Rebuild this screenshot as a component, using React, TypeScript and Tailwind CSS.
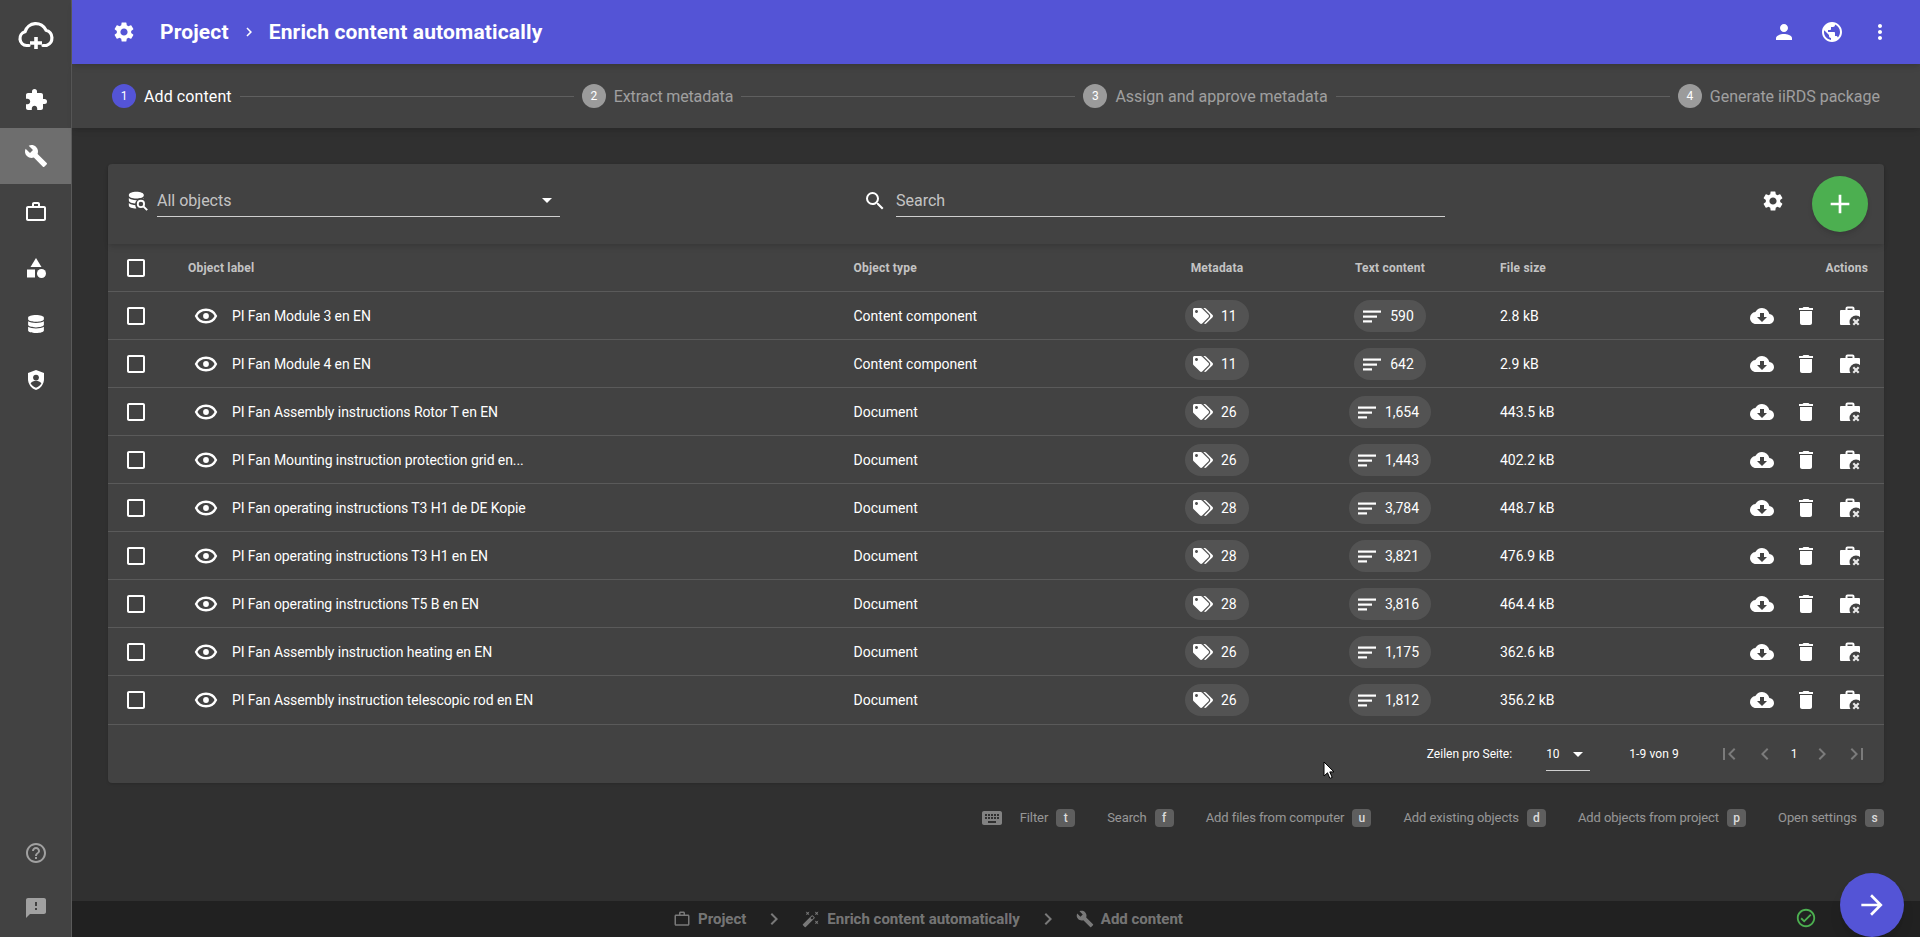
import React from "react";
import {
  MdSettings, MdChevronRight, MdChevronLeft, MdPerson, MdPublic, MdMoreVert, MdExtension, MdBuild,
  MdWorkOutline, MdCategory, MdHelpOutline, MdFeedback, MdArrowDropDown, MdSearch, MdAdd,
  MdCheckBoxOutlineBlank, MdCloudDownload, MdDelete, MdFirstPage, MdLastPage,
  MdKeyboard, MdAutoFixHigh, MdOutlineCheckCircle, MdArrowForward,
} from "react-icons/md";
import { FaTags, FaDatabase } from "react-icons/fa";

const rows = [
  ["PI Fan Module 3 en EN", "Content component", "11", "590", "2.8 kB"],
  ["PI Fan Module 4 en EN", "Content component", "11", "642", "2.9 kB"],
  ["PI Fan Assembly instructions Rotor T en EN", "Document", "26", "1,654", "443.5 kB"],
  ["PI Fan Mounting instruction protection grid en...", "Document", "26", "1,443", "402.2 kB"],
  ["PI Fan operating instructions T3 H1 de DE Kopie", "Document", "28", "3,784", "448.7 kB"],
  ["PI Fan operating instructions T3 H1 en EN", "Document", "28", "3,821", "476.9 kB"],
  ["PI Fan operating instructions T5 B en EN", "Document", "28", "3,816", "464.4 kB"],
  ["PI Fan Assembly instruction heating en EN", "Document", "26", "1,175", "362.6 kB"],
  ["PI Fan Assembly instruction telescopic rod en EN", "Document", "26", "1,812", "356.2 kB"],
];

const gridCols = "grid grid-cols-[80px_665.5px_300.5px_126px_220px_150px_1fr] items-center";

function LogoIcon() {
  return (
    <svg width="38" height="30" viewBox="0 0 38 30" fill="none">
      <path d="M12 24.5H9.5A7 7 0 0 1 8 10.8A11.2 11.2 0 0 1 29 9.2A8 8 0 0 1 29.5 24.5H26" stroke="white" strokeWidth="3.2" strokeLinecap="round" />
      <path d="M19 16v12M13 22h12" stroke="white" strokeWidth="3.6" />
    </svg>
  );
}

function ShieldIcon() {
  return (
    <svg width="24" height="24" viewBox="0 0 24 24">
      <path fill="white" d="M12 2 4 5v6.100c0 5 3.400 9.700 8 10.900 4.600-1.200 8-5.900 8-10.900V5z" />
      <circle cx="12" cy="9.600" r="2.900" fill="#424242" />
      <path fill="#424242" d="M6.600 15.600c1-1.900 3.200-2.800 5.400-2.800s4.400.9 5.400 2.800c-1.200 1.900-3.100 3.500-5.400 4.200-2.300-.7-4.200-2.300-5.400-4.200z" />
    </svg>
  );
}

function DbSearchIcon() {
  return (
    <svg width="20" height="20" viewBox="0 0 24 24">
      <path fill="white" d="M1 5c0-2.500 4-4 9-4s9 1.500 9 4-4 4-9 4-9-1.500-9-4zm0 3.500c1.500 1.700 5 2.600 9 2.600s7.500-.9 9-2.600V11c0 2.500-4 4-9 4s-9-1.500-9-4zm0 6c1.500 1.700 5 2.600 9 2.600v3.900c-5 0-9-1.500-9-4z" />
      <circle cx="16" cy="16" r="7.500" fill="#424242" />
      <circle cx="15.500" cy="15.500" r="3.800" fill="none" stroke="white" strokeWidth="2.200" />
      <path d="M18.500 18.500 23 23" stroke="white" strokeWidth="2.400" />
    </svg>
  );
}

function BriefcaseRemoveIcon() {
  return (
    <svg width="24" height="24" viewBox="0 0 24 24">
      <path fill="white" fillRule="evenodd" d="M7.500 6V4.500A2 2 0 0 1 9.500 2.500h5a2 2 0 0 1 2 2V6H21a1 1 0 0 1 1 1v13a1 1 0 0 1-1 1H3a1 1 0 0 1-1-1V7a1 1 0 0 1 1-1zm2 0h5V4.500h-5z" />
      <circle cx="18" cy="18" r="6.500" fill="#424242" />
      <path d="M15.300 15.300l5.400 5.400M20.700 15.300l-5.400 5.400" stroke="#e8e8e8" strokeWidth="2.200" />
    </svg>
  );
}

function LinesIcon() {
  return (
    <svg width="24" height="24" viewBox="0 0 24 24" fill="white">
      <rect x="3" y="6.500" width="18" height="2.200" />
      <rect x="3" y="11.500" width="14" height="2.200" />
      <rect x="3" y="16.300" width="9" height="2.200" />
    </svg>
  );
}

function EyeIcon() {
  return (
    <svg width="24" height="24" viewBox="0 0 24 24" className="ml-[6px]">
      <path fill="none" stroke="white" strokeWidth="2.400" d="M12 5.800c4.400 0 8.200 2.500 9.900 6.200-1.700 3.700-5.500 6.200-9.900 6.200S3.800 15.700 2.100 12C3.800 8.300 7.600 5.800 12 5.800z" />
      <circle cx="12" cy="12" r="2.900" fill="white" />
    </svg>
  );
}

function Cursor() {
  return (
    <svg className="absolute left-[1323px] top-[761px]" width="13" height="19" viewBox="0 0 13 19">
      <path d="M1 1v14l3.500-3.200 2.400 5.600 2.300-1-2.400-5.500H11z" fill="white" stroke="black" strokeWidth="1" />
    </svg>
  );
}

function NavItem({ children, active }: { children: React.ReactNode; active?: boolean }) {
  return <div className={`flex h-14 items-center justify-center ${active ? "bg-[#6e6e6e]" : ""}`}>{children}</div>;
}

function Step({ n, label, active, tracking }: { n: number; label: string; active?: boolean; tracking?: string }) {
  return (
    <div className="flex items-center">
      <div className={`flex size-6 items-center justify-center rounded-full text-xs ${active ? "bg-[#5454d6]" : "bg-[#9b9b9b]"} text-white`}>{n}</div>
      <span className={`ml-2 pt-px text-base ${tracking ?? ""} ${active ? "text-white" : "text-white/50"}`}>{label}</span>
    </div>
  );
}

function Line() {
  return <div className="mx-2 h-px flex-1 bg-[#5f5f5f]" />;
}

function Hint({ label, k }: { label: string; k: string }) {
  return (
    <div className="ml-8 flex items-center">
      <span className="text-[13px] tracking-[-0.08px] text-white/50">{label}</span>
      <span className="ml-2 flex h-[18px] w-[19px] items-center justify-center rounded-sm bg-[#5e5e5e] text-xs font-medium text-[#dcdcdc]">{k}</span>
    </div>
  );
}

function Crumb({ icon, label }: { icon: React.ReactNode; label: string }) {
  return (
    <div className="flex items-center">
      {icon}
      <span className="ml-[7px] text-[15px] font-bold text-white/40">{label}</span>
    </div>
  );
}

export default function App() {
  return (
    <div className="relative flex h-[937px] w-[1920px] overflow-hidden bg-[#303030] font-['Roboto',sans-serif] text-white">
      <aside className="flex w-[72px] shrink-0 flex-col border-r border-[#5a5a5a] bg-[#424242]">
        <div className="flex h-[72px] items-center justify-center"><LogoIcon /></div>
        <NavItem><MdExtension size={24} /></NavItem>
        <NavItem active><MdBuild size={24} /></NavItem>
        <NavItem><MdWorkOutline size={24} /></NavItem>
        <NavItem><MdCategory size={24} /></NavItem>
        <NavItem><FaDatabase size={18} /></NavItem>
        <NavItem><ShieldIcon /></NavItem>
        <div className="mt-auto flex h-[52px] items-center justify-center text-white/50"><MdHelpOutline size={24} /></div>
        <div className="flex h-[58px] items-center justify-center text-white/50"><MdFeedback size={24} /></div>
      </aside>

      <div className="flex min-w-0 flex-1 flex-col">
        <header className="relative z-20 flex h-16 shrink-0 items-center bg-[#5454d6] pl-10 pr-[28px] shadow-md">
          <MdSettings size={24} />
          <span className="ml-6 pt-[2px] text-[21px] font-bold tracking-[0.15px]">Project</span>
          <MdChevronRight size={18} className="ml-[11px]" />
          <span className="ml-[11px] pt-[2px] text-[21px] font-bold tracking-[0.15px]">Enrich content automatically</span>
          <div className="ml-auto flex items-center gap-6">
            <MdPerson size={24} />
            <MdPublic size={24} />
            <MdMoreVert size={24} />
          </div>
        </header>

        <div className="relative z-10 flex h-16 shrink-0 items-center bg-[#424242] pl-10 pr-10 shadow-md">
          <Step n={1} label="Add content" active tracking="tracking-[0.1px]" />
          <Line />
          <Step n={2} label="Extract metadata" tracking="tracking-[-0.15px]" />
          <Line />
          <Step n={3} label="Assign and approve metadata" />
          <Line />
          <Step n={4} label="Generate iiRDS package" />
        </div>

        <main className="flex-1 px-9 pt-9">
          <div className="rounded-sm bg-[#424242] shadow">
            <div className="relative flex h-20 items-center pl-5 pr-4 shadow-md">
              <div className="mb-[7px]"><DbSearchIcon /></div>
              <div className="mb-[7px] ml-[9px] flex h-[33px] w-[403px] items-center justify-between border-b border-[#cfcfcf] pr-[1px] text-base text-white/70">
                <span className="pt-[2px]">All objects</span>
                <MdArrowDropDown size={24} className="text-white" />
              </div>
              <MdSearch size={24} className="mb-[7px] ml-[303px]" />
              <div className="mb-[7px] ml-[9px] flex h-[33px] w-[549px] items-center border-b border-[#cfcfcf] pt-[2px] text-base text-white/70">Search</div>
              <MdSettings size={24} className="mb-[7px] ml-auto" />
              <div className="ml-[27px] flex size-14 items-center justify-center rounded-full bg-[#4caf50] shadow-md"><MdAdd size={32} /></div>
            </div>

            <div className={`${gridCols} h-12 border-b border-[#5a5a5a] text-xs font-bold tracking-[0.2px] text-white/70`}>
              <div className="flex justify-center"><MdCheckBoxOutlineBlank size={24} className="-ml-[24px] text-white" /></div>
              <div>Object label</div>
              <div>Object type</div>
              <div className="text-center">Metadata</div>
              <div className="text-center">Text content</div>
              <div>File size</div>
              <div className="pr-4 text-right">Actions</div>
            </div>

            {rows.map((r, i) => (
              <div key={r[0]} className={`${gridCols} ${i === 8 ? "h-[49px]" : "h-12"} border-b border-[#5a5a5a] text-sm`}>
                <div className="flex justify-center"><MdCheckBoxOutlineBlank size={24} className="-ml-[24px]" /></div>
                <div className="flex items-center">
                  <EyeIcon />
                  <span className="ml-[14px] tracking-[-0.08px]">{r[0]}</span>
                </div>
                <div>{r[1]}</div>
                <div className="flex justify-center">
                  <div className="flex h-8 w-16 items-center rounded-full bg-[#535353] pl-2">
                    <FaTags size={20} />
                    <span className="ml-2">{r[2]}</span>
                  </div>
                </div>
                <div className="flex justify-center">
                  <div className="flex h-8 items-center rounded-full bg-[#535353] pl-[6px] pr-3">
                    <LinesIcon />
                    <span className="ml-[6px]">{r[3]}</span>
                  </div>
                </div>
                <div>{r[4]}</div>
                <div className="flex items-center justify-end gap-5 pr-[22px]">
                  <MdCloudDownload size={24} />
                  <MdDelete size={24} />
                  <BriefcaseRemoveIcon />
                </div>
              </div>
            ))}

            <div className="flex h-[58px] items-center justify-end pr-[15px] text-xs">
              <span>Zeilen pro Seite:</span>
              <div className="ml-[34px] flex h-[33px] w-[44px] items-center justify-between border-b border-[#cfcfcf]">
                <span>10</span>
                <MdArrowDropDown size={24} />
              </div>
              <span className="ml-[39px] tracking-[0.13px]">1-9 von 9</span>
              <div className="ml-[38px] flex items-center text-white/30">
                <MdFirstPage size={24} />
                <MdChevronLeft size={24} className="ml-3" />
                <span className="ml-[9px] w-[16px] text-center text-white">1</span>
                <MdChevronRight size={24} className="ml-[8px]" />
                <MdLastPage size={24} className="ml-[11px]" />
              </div>
            </div>
          </div>

          <div className="mt-[25px] flex h-5 items-center justify-end">
            <MdKeyboard size={24} className="text-white/40" />
            <div className="-ml-4 flex items-center">
              <Hint label="Filter" k="t" />
              <Hint label="Search" k="f" />
              <Hint label="Add files from computer" k="u" />
              <Hint label="Add existing objects" k="d" />
              <Hint label="Add objects from project" k="p" />
              <Hint label="Open settings" k="s" />
            </div>
          </div>
        </main>

        <footer className="flex h-9 shrink-0 items-center bg-[#212121] pl-[601px] pr-4">
          <Crumb icon={<MdWorkOutline size={18} className="text-white/40" />} label="Project" />
          <MdChevronRight size={24} className="mx-[16px] text-white/40" />
          <Crumb icon={<MdAutoFixHigh size={18} className="text-white/40" />} label="Enrich content automatically" />
          <MdChevronRight size={24} className="mx-[16px] text-white/40" />
          <Crumb icon={<MdBuild size={18} className="text-white/40" />} label="Add content" />
        </footer>
      </div>

      <MdOutlineCheckCircle size={22} className="absolute left-[1795px] top-[907px] text-[#4caf50]" />
      <div className="absolute left-[1840px] top-[873px] flex size-16 items-center justify-center rounded-full bg-[#5454d6] shadow-lg">
        <MdArrowForward size={32} />
      </div>
      <Cursor />
    </div>
  );
}
